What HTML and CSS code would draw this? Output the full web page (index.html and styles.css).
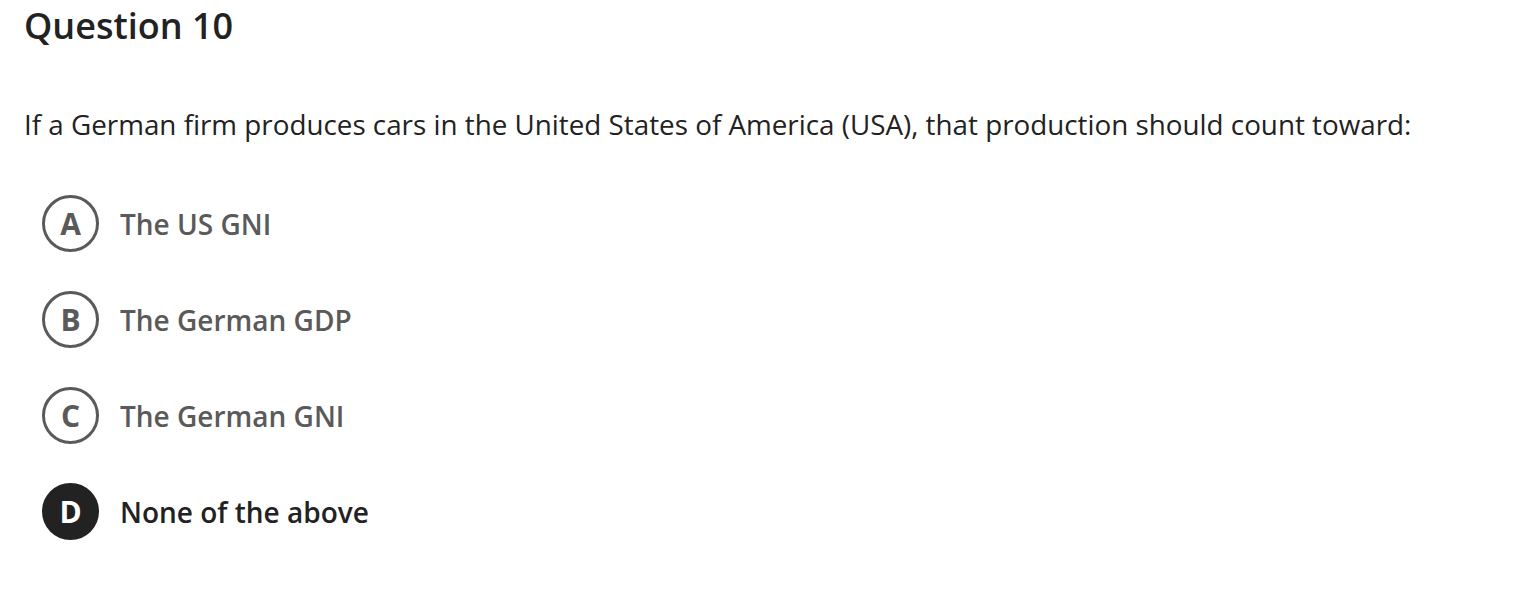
FILE: index.html
```html
<!DOCTYPE html>
<html>
<head>
<meta charset="utf-8">
<link rel="stylesheet" href="styles.css">
</head>
<body>
<div class="page">
  <h1 class="title">Question 10</h1>
  <p class="question">If a German firm produces cars in the United States of America (USA), that production should count toward:</p>
  <ul class="options">
    <li class="option"><span class="badge">A</span><span class="label">The US GNI</span></li>
    <li class="option"><span class="badge">B</span><span class="label">The German GDP</span></li>
    <li class="option"><span class="badge">C</span><span class="label">The German GNI</span></li>
    <li class="option selected"><span class="badge">D</span><span class="label">None of the above</span></li>
  </ul>
</div>
</body>
</html>
```

FILE: styles.css
```css
html, body {
  margin: 0;
  padding: 0;
  background: #ffffff;
}
body {
  font-family: "Open Sans", "Noto Sans", sans-serif;
  color: #222;
}
.page {
  padding: 2px 24px 0 24px;
}
.title {
  margin: 0;
  font-size: 36px;
  font-weight: 600;
  line-height: 48px;
  color: #222;
}
.question {
  margin: 54px 0 0 0;
  font-size: 27.8px;
  font-weight: 400;
  line-height: 40px;
  color: #222;
}
.options {
  list-style: none;
  margin: 51px 0 0 18px;
  padding: 0;
  display: flex;
  flex-direction: column;
  gap: 39px;
}
.option {
  display: flex;
  align-items: center;
  gap: 21px;
  height: 57px;
}
.badge {
  flex: none;
  width: 57px;
  height: 57px;
  box-sizing: border-box;
  border: 3px solid #5a5a5a;
  border-radius: 50%;
  display: flex;
  align-items: center;
  justify-content: center;
  font-size: 30px;
  font-weight: 700;
  color: #5a5a5a;
}
.label {
  font-size: 28px;
  font-weight: 600;
  color: #5a5a5a;
}
.selected .badge {
  background: #222;
  border-color: #222;
  color: #fff;
}
.selected .label {
  color: #222;
}
```
